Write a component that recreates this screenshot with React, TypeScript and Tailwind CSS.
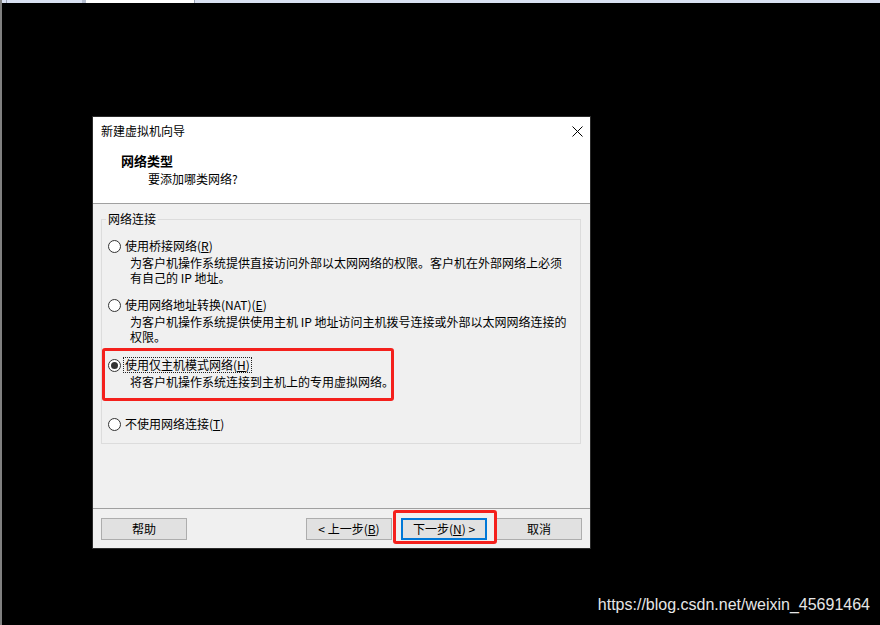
import React from "react";

const ui = "font-['Noto_Sans_CJK_SC',sans-serif] text-[12px] text-black";

const Radio = ({ checked = false }: { checked?: boolean }) => (
  <span className="flex h-[13px] w-[13px] shrink-0 items-center justify-center rounded-full border border-[#333333] bg-white">
    {checked && <span className="h-[7px] w-[7px] rounded-full bg-[#333333]" />}
  </span>
);

interface OptionProps {
  label: React.ReactNode;
  desc?: React.ReactNode;
  checked?: boolean;
  focused?: boolean;
  marked?: boolean;
  className?: string;
}

const Option = ({ label, desc, checked, focused, marked, className = "" }: OptionProps) => (
  <div className={`relative ${className}`}>
    {marked && (
      <div className="absolute -left-[6px] -top-[9px] h-[53px] w-[292px] rounded-[3px] border-[3px] border-[#f4201c]" />
    )}
    <div className="flex h-[16px] items-center">
      <Radio checked={checked} />
      <span
        className={
          focused
            ? "ml-[3px] inline-block h-[14px] px-[1px] leading-[14px] outline-1 outline-dotted outline-[#222]"
            : "ml-[4px] leading-[16px]"
        }
      >
        {label}
      </span>
    </div>
    {desc && <div className="pl-[22px] pt-[1px] leading-[15px]">{desc}</div>}
  </div>
);

const Button = ({ children, className = "" }: { children: React.ReactNode; className?: string }) => (
  <div
    className={`flex h-[22px] w-[86px] items-center justify-center bg-[#e1e1e1] leading-[16px] ${className}`}
  >
    {children}
  </div>
);

export default function App() {
  return (
    <div className={`relative h-[625px] w-[880px] overflow-hidden bg-black ${ui}`}>
      <div className="flex h-full">
        <div className="w-[2px] shrink-0 bg-[#808080]" />
        <div className="flex flex-1 flex-col">
          {/* strip of the host window */}
          <div className="flex h-[3px] shrink-0">
            <div className="w-[4px] bg-[#d9e1f2]" />
            <div className="w-[1px] bg-[#9aa3b5]" />
            <div className="w-[75px] bg-[#d9e1f2]" />
            <div className="w-[4px] bg-[#b4bdd0]" />
            <div className="w-[108px] bg-white" />
            <div className="w-[1px] bg-[#9aa3b5]" />
            <div className="flex-1 bg-[#d9e1f2]" />
          </div>

          <div className="pl-[90px] pt-[113px]">
            <div className="flex w-[499px] flex-col border border-[#2a2a2a]">
              {/* title + header */}
              <div className="bg-white">
                <div className="flex h-[28px] items-center justify-between pl-[8px] pr-[7px]">
                  <span className="leading-[16px]">新建虚拟机向导</span>
                  <svg width="11" height="11" viewBox="0 0 11 11" className="block">
                    <path d="M0.5 0.5 L10.5 10.5 M10.5 0.5 L0.5 10.5" stroke="#000" strokeWidth="1" />
                  </svg>
                </div>
                <div className="pb-[16px] pt-[8px]">
                  <div className="pl-[28px] text-[13px] font-bold leading-[16px]">网络类型</div>
                  <div className="mt-[2px] pl-[55px] leading-[16px]">要添加哪类网络?</div>
                </div>
              </div>
              <div className="h-[1px] bg-[#a0a0a0]" />

              {/* body */}
              <div className="h-[304px] bg-[#f0f0f0] pl-[8px] pr-[9px] pt-[7px]">
                <fieldset className="border border-[#dcdcdc]">
                  <legend className="ml-[4px] px-[2px] leading-[16px]">网络连接</legend>
                  <div className="pb-[11px] pl-[6px] pt-[11px]">
                    <Option
                      label={<>使用桥接网络(<u>R</u>)</>}
                      desc={
                        <>
                          为客户机操作系统提供直接访问外部以太网网络的权限。客户机在外部网络上必须
                          <br />
                          有自己的 IP 地址。
                        </>
                      }
                    />
                    <Option
                      className="mt-[12px]"
                      label={<>使用网络地址转换(NAT)(<u>E</u>)</>}
                      desc={
                        <>
                          为客户机操作系统提供使用主机 IP 地址访问主机拨号连接或外部以太网网络连接的
                          <br />
                          权限。
                        </>
                      }
                    />
                    <Option
                      className="mt-[13px]"
                      checked
                      focused
                      marked
                      label={<>使用仅主机模式网络(<u>H</u>)</>}
                      desc="将客户机操作系统连接到主机上的专用虚拟网络。"
                    />
                    <Option className="mt-[27px]" label={<>不使用网络连接(<u>T</u>)</>} />
                  </div>
                </fieldset>
              </div>
              <div className="h-[1px] bg-[#a0a0a0]" />

              {/* footer */}
              <div className="flex h-[39px] items-start bg-[#f0f0f0] pl-[8px] pr-[8px] pt-[9px]">
                <Button className="border border-[#adadad]">帮助</Button>
                <div className="ml-auto flex gap-[9px]">
                  <Button className="border border-[#adadad]">
                    &lt; 上一步(<u>B</u>)
                  </Button>
                  <div className="relative z-10">
                    <div className="absolute -left-[8px] -top-[8px] h-[34px] w-[104px] rounded-[3px] border-[3px] border-[#f4201c]" />
                    <Button className="border-2 border-[#0078d7]">
                      下一步(<u>N</u>) &gt;
                    </Button>
                  </div>
                  <Button className="border border-[#adadad]">取消</Button>
                </div>
              </div>
            </div>
          </div>
        </div>
      </div>

      <div className="absolute bottom-[11px] right-[10px] font-['Liberation_Sans',Arial,sans-serif] text-[16px] leading-[18px] text-[#e6e6e6]">
        https://blog.csdn.net/weixin_45691464
      </div>
    </div>
  );
}
